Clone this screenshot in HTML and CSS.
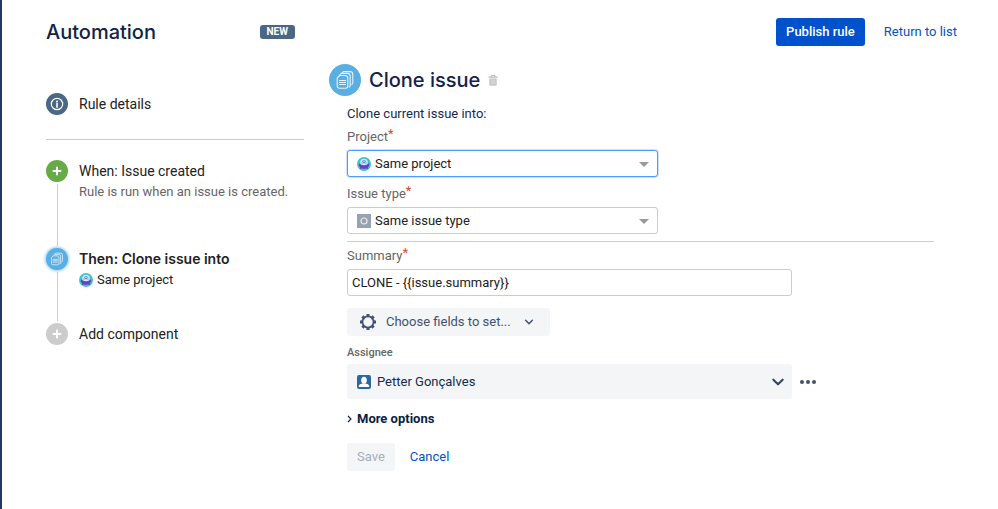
FILE: index.html
```html
<!DOCTYPE html>
<html lang="en">
<head>
<meta charset="utf-8">
<meta name="viewport" content="width=device-width, initial-scale=1">
<title>Automation</title>
<link rel="stylesheet" href="styles.css">
</head>
<body>
<svg class="sprites" aria-hidden="true">
  <symbol id="clone" viewBox="0 0 20 20">
    <g fill="none" stroke="#e4f3fc" stroke-width="1.1" stroke-linejoin="round">
      <path d="M7 2.800 8.200 1.600H15q2.800 0 2.800 2.800v8q0 1.800-1.400 2.200"/>
      <path d="M4.600 4.800 6.200 3.400h6.200q2.800 0 2.800 2.800v9q0 1.600-1.400 2"/>
      <path d="M4.600 5.500h5.800q2.400 0 2.400 2.400v8.200q0 2.200-2.200 2.200H4.400q-2.200 0-2.200-2.200V8z"/>
      <path d="M4 10.500h7M4 12.500h7M4 14.500h7"/>
    </g>
  </symbol>
  <symbol id="project" viewBox="0 0 16 16">
    <circle cx="8" cy="8" r="8" fill="#3fc3c8"/>
    <circle cx="8" cy="6.300" r="4.300" fill="#d7ecff"/>
    <path d="M5.800 8V6a2.200 2.200 0 0 1 4.400 0v2" fill="none" stroke="#5f9fe8" stroke-width="1"/>
    <circle cx="8" cy="6.200" r="1" fill="#3c78d8"/>
    <path d="M2 7.600q1.200-.4 2.200 1Q8 10 11.800 8.600q1-1.400 2.200-1 .4 2.400-1.600 4l.4 2.200-2.200-.8q-2.600.7-5.200 0l-2.200.8.400-2.200Q1.600 10 2 7.600z" fill="#6b3fc0"/>
  </symbol>
  <symbol id="plus" viewBox="0 0 10 10">
    <path d="M5 1.500v7M1.500 5h7" stroke="#fff" stroke-width="2" stroke-linecap="round"/>
  </symbol>
  <symbol id="chevron" viewBox="0 0 12 12">
    <path d="M2 4l4 4 4-4" fill="none" stroke="currentColor" stroke-width="1.800" stroke-linecap="round" stroke-linejoin="round"/>
  </symbol>
</svg>

<div class="page">
  <header class="topbar">
    <div class="brand">
      <h1>Automation</h1>
      <span class="lozenge">NEW</span>
    </div>
    <div class="actions">
      <button class="btn btn-primary" type="button">Publish rule</button>
      <a class="link" href="#list">Return to list</a>
    </div>
  </header>

  <div class="columns">
    <nav class="sidebar" aria-label="Rule">
      <a class="details" href="#details">
        <span class="dot dot-info">
          <svg class="info" viewBox="0 0 14 14"><circle cx="7" cy="7" r="5.700" fill="none" stroke="#fff" stroke-width="1.200"/><circle cx="7" cy="4.400" r="1" fill="#fff"/><path d="M7 6.500v3.800" stroke="#fff" stroke-width="1.600" stroke-linecap="round"/></svg>
        </span>
        Rule details
      </a>
      <ol class="steps">
        <li class="step step-trigger">
          <span class="track"><span class="dot dot-trigger"><svg class="plus"><use href="#plus"/></svg></span></span>
          <div class="step-body">
            <a class="step-title" href="#trigger">When: Issue created</a>
            <p class="note">Rule is run when an issue is created.</p>
          </div>
        </li>
        <li class="step step-action">
          <span class="track"><span class="dot dot-action"><svg class="clone-small"><use href="#clone"/></svg></span></span>
          <div class="step-body">
            <a class="step-title current" href="#action">Then: Clone issue into</a>
            <p class="target"><svg class="avatar"><use href="#project"/></svg>Same project</p>
          </div>
        </li>
        <li class="step">
          <span class="dot dot-add"><svg class="plus"><use href="#plus"/></svg></span>
          <div class="step-body"><a class="step-title" href="#add">Add component</a></div>
        </li>
      </ol>
    </nav>

    <main class="main">
      <div class="heading">
        <span class="badge"><svg class="clone-large"><use href="#clone"/></svg></span>
        <h2>Clone issue</h2>
        <button class="icon-btn trash" type="button" aria-label="Delete">
          <svg viewBox="0 0 12 14"><path d="M.5 3h11M4 2.500V1h4v1.500" fill="none" stroke="#bdbdbd" stroke-width="1.400"/><path d="M1.500 4.500h9V12q0 1.200-1.200 1.200H2.700Q1.500 13.200 1.500 12z" fill="#c8c8c8"/><path d="M4.300 6v5.500M6 6v5.500M7.700 6v5.500" stroke="#e6e6e6" stroke-width=".7"/></svg>
        </button>
      </div>
      <form class="form">
        <p class="intro">Clone current issue into:</p>

        <label class="label" for="project-field">Project<span class="req">*</span></label>
        <div class="picker">
          <svg class="picker-icon"><use href="#project"/></svg>
          <select class="box focused" id="project-field"><option>Same project</option></select>
          <span class="caret"></span>
        </div>

        <label class="label label-next" for="type-field">Issue type<span class="req">*</span></label>
        <div class="picker">
          <svg class="picker-icon" viewBox="0 0 14 14"><path d="M0 0h14v14H0z" fill="#98a3b1"/><circle cx="7" cy="7" r="3" fill="none" stroke="#e6eaee" stroke-width="1.200"/></svg>
          <select class="box" id="type-field"><option>Same issue type</option></select>
          <span class="caret"></span>
        </div>

        <hr class="rule">

        <label class="label" for="summary">Summary<span class="req">*</span></label>
        <input class="box text" id="summary" type="text" value="CLONE - {{issue.summary}}">

        <button class="btn choose" type="button">
          <svg class="gear" viewBox="0 0 18 18"><circle cx="9" cy="9" r="5.600" fill="none" stroke="currentColor" stroke-width="1.800"/><g stroke="currentColor" stroke-width="3"><path id="tooth" d="M9 1v2.300M9 14.700V17M1 9h2.300M14.700 9H17"/><use href="#tooth" transform="rotate(45 9 9)"/></g></svg>
          Choose fields to set...
          <svg class="chev"><use href="#chevron"/></svg>
        </button>

        <label class="label-small" for="assignee">Assignee</label>
        <div class="assignee-row">
          <div class="picker wide">
            <svg class="picker-icon" viewBox="0 0 14 14"><rect width="14" height="14" rx="2" fill="#2a67a5"/><ellipse cx="7" cy="5.200" rx="2.800" ry="3.500" fill="#fff"/><path d="M1.800 12v-1.200q.4-1.600 3.600-2.200h3.200q3.200.6 3.600 2.200V12z" fill="#fff"/></svg>
            <select class="box filled" id="assignee"><option>Petter Gonçalves</option></select>
            <svg class="arrow"><use href="#chevron"/></svg>
          </div>
          <button class="icon-btn more" type="button" aria-label="More actions">
            <svg viewBox="0 0 18 6"><g fill="currentColor"><circle cx="3" cy="3" r="2"/><circle cx="9" cy="3" r="2"/><circle cx="15" cy="3" r="2"/></g></svg>
          </button>
        </div>

        <button class="disclosure" type="button">
          <svg viewBox="0 0 6 8"><path d="M1 1 4 4 1 7" fill="none" stroke="currentColor" stroke-width="1.100"/></svg>
          More options
        </button>

        <div class="footer">
          <button class="btn save" type="submit" disabled>Save</button>
          <a class="link" href="#cancel">Cancel</a>
        </div>
      </form>
    </main>
  </div>
</div>
</body>
</html>
```
FILE: styles.css
```css
* { box-sizing: border-box; }

body {
  margin: 0;
  min-height: 100vh;
  border-left: 2px solid #1f3864;
  background: #fff;
  color: #222;
  font: 13px/20px Roboto, "Liberation Sans", sans-serif;
}

h1, h2, p, ol { margin: 0; padding: 0; font-weight: 400; }
svg { display: block; flex: none; }
a { color: inherit; text-decoration: none; }
button, input, select { font: inherit; color: inherit; }

.sprites { position: absolute; width: 0; height: 0; }

.page { padding: 0 41px 24px 44px; }

.topbar {
  display: flex;
  justify-content: space-between;
  align-items: center;
  height: 64px;
}
.brand { display: flex; justify-content: space-between; align-items: center; width: 249px; }
h1, h2 {
  color: #10234a;
  font-family: Inter, "Liberation Sans", sans-serif;
  font-size: 20px;
  line-height: 28px;
  font-weight: 500;
}
.lozenge {
  padding: 0 7px;
  border-radius: 3px;
  background: #4a6785;
  color: #fff;
  font-size: 10px;
  line-height: 14px;
  font-weight: 700;
}
.actions { display: flex; align-items: center; gap: 19px; }

.btn {
  display: flex;
  align-items: center;
  height: 28px;
  padding: 0 10px;
  border: 0;
  border-radius: 3px;
  background: #f4f5f7;
}
.btn-primary { background: #0052cc; color: #fff; font-weight: 500; }
.link { color: #0052cc; }

.columns { display: flex; gap: 25px; }
.sidebar { flex: 0 0 258px; font-size: 14px; }

.dot {
  display: flex;
  flex: none;
  align-items: center;
  justify-content: center;
  width: 22px;
  height: 22px;
  border-radius: 50%;
}
.dot-info { background: #4a6785; }
.dot-trigger { background: #67ab49; }
.dot-action { background: #59afe1; box-shadow: 0 0 3px 1px #8fcdf0; }
.dot-add { background: #ccc; }
.info { width: 14px; height: 14px; }
.plus { width: 10px; height: 10px; }
.clone-small { width: 14px; height: 14px; }

.details {
  display: flex;
  align-items: center;
  gap: 11px;
  padding: 29px 0 24px;
  border-bottom: 1px solid #ccc;
}

.steps { padding-top: 20px; list-style: none; }
.step { display: flex; gap: 11px; }
.step-trigger { min-height: 88px; }
.step-action { min-height: 75px; }
.track { display: flex; flex-direction: column; align-items: center; }
.track::after { content: ""; flex: 1; width: 1px; margin: 2px 0; background: #ccc; }
.step-body { padding-top: 1px; }
.step-title { display: block; }
.current { font-family: Inter, "Liberation Sans", sans-serif; font-weight: 600; }
.note { color: #666; font-size: 13px; line-height: 22px; }
.target { display: flex; align-items: center; gap: 4px; font-size: 13px; line-height: 22px; }
.avatar { width: 14px; height: 14px; }

.main { flex: 1; min-width: 0; padding-right: 23px; }
.heading { display: flex; align-items: center; gap: 8px; }
.badge {
  display: flex;
  align-items: center;
  justify-content: center;
  width: 32px;
  height: 32px;
  border-radius: 50%;
  background: #59afe1;
}
.clone-large { width: 20px; height: 20px; }
.icon-btn { padding: 0; border: 0; background: none; }
.trash svg { width: 10px; height: 13px; }

.form { padding: 8px 0 0 18px; }
.intro { color: #172b4d; margin-bottom: 3px; }
.label { display: block; margin-bottom: 3px; color: #666; }
.label-next { margin-top: 7px; }
.req { color: #e0453a; vertical-align: top; line-height: 14px; }

.picker { position: relative; max-width: 311px; }
.wide { flex: 1; max-width: 445px; }
.box {
  display: block;
  width: 100%;
  height: 27px;
  padding: 0 24px 0 27px;
  border: 1px solid #ccc;
  border-radius: 3px;
  outline: 0;
  background: #fff;
  color: #222;
  appearance: none;
}
.focused { border-color: #4c9aff; box-shadow: 0 0 0 1px #cfe3ff; }
.picker-icon {
  position: absolute;
  top: 50%;
  left: 10px;
  width: 14px;
  height: 14px;
  margin-top: -7px;
}
.caret {
  position: absolute;
  top: 50%;
  right: 9px;
  margin-top: -2px;
  border: 5px solid transparent;
  border-top: 5px solid #999;
  border-bottom: 0;
  pointer-events: none;
}
.rule { height: 1px; margin: 7px 0 4px; border: 0; background: #ccc; }
.text { max-width: 445px; padding: 0 4px; }

.choose { gap: 9px; margin-top: 12px; padding: 0 16px 0 12px; color: #42526e; }
.gear { width: 18px; height: 18px; }
.chev { width: 10px; height: 10px; margin-left: 4px; }

.label-small {
  display: block;
  margin: 9px 0 3px;
  color: #666;
  font-size: 11px;
  line-height: 16px;
  font-weight: 500;
}
.assignee-row { display: flex; align-items: center; gap: 7px; }
.filled { height: 35px; padding-left: 30px; border: 0; background: #f4f5f7; color: #172b4d; }
.arrow {
  position: absolute;
  top: 50%;
  right: 7px;
  width: 14px;
  height: 14px;
  margin-top: -7px;
  color: #2f466b;
  pointer-events: none;
}
.more { color: #42526e; }
.more svg { width: 18px; height: 6px; }

.disclosure {
  display: flex;
  align-items: center;
  gap: 4px;
  margin: 10px 0 14px;
  padding: 0;
  border: 0;
  background: none;
  color: #091e42;
  font-weight: 700;
}
.disclosure svg { width: 6px; height: 8px; }
.footer { display: flex; align-items: center; gap: 15px; }
.save { color: #a5adba; }
```
